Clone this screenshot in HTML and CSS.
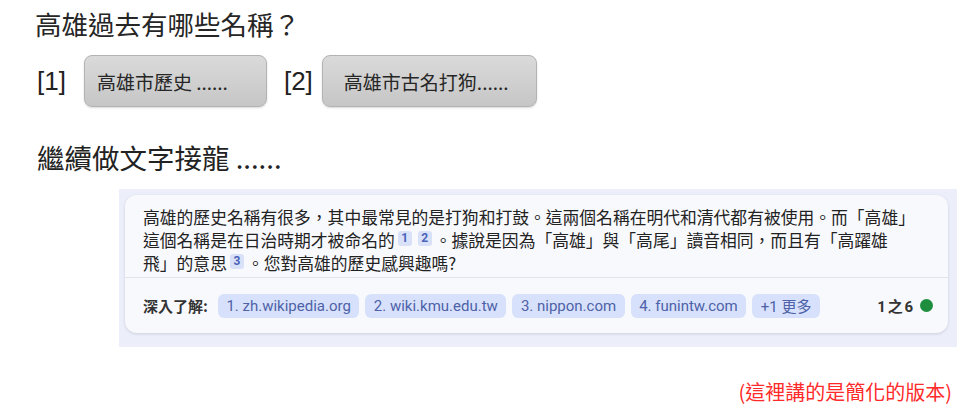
FILE: index.html
```html
<!DOCTYPE html>
<html lang="zh-Hant">
<head>
<meta charset="utf-8">
<link rel="stylesheet" href="styles.css">
</head>
<body>
<div class="slide">
  <h1 class="q">高雄過去有哪些名稱？</h1>
  <div class="refs">
    <span class="ref ref1">[1]</span>
    <span class="btn btn1">高雄市歷史 ......</span>
    <span class="ref ref2">[2]</span>
    <span class="btn btn2">高雄市古名打狗......</span>
  </div>
  <h2 class="cont">繼續做文字接龍 ......</h2>
  <div class="panel">
    <div class="card">
      <div class="body">高雄的歷史名稱有很多，其中最常見的是打狗和打鼓。這兩個名稱在明代和清代都有被使用。而「高雄」<br>這個名稱是在日治時期才被命名的<span class="cite">1</span><span class="cite">2</span>。據說是因為「高雄」與「高尾」讀音相同，而且有「高躍雄<br>飛」的意思<span class="cite">3</span>。您對高雄的歷史感興趣嗎?</div>
      <div class="foot">
        <span class="more">深入了解:</span>
        <span class="chip">1. zh.wikipedia.org</span>
        <span class="chip">2. wiki.kmu.edu.tw</span>
        <span class="chip">3. nippon.com</span>
        <span class="chip">4. funintw.com</span>
        <span class="chip">+1 更多</span>
        <span class="count">1 之 6</span>
        <span class="dot"></span>
      </div>
    </div>
  </div>
  <p class="note">(這裡講的是簡化的版本)</p>
</div>
</body>
</html>
```

FILE: styles.css
```css
html, body {
  margin: 0;
  padding: 0;
  background: #ffffff;
}
body {
  width: 959px;
  height: 412px;
  overflow: hidden;
  font-family: "Noto Sans CJK TC", "Noto Sans", sans-serif;
  color: #222;
}
.slide {
  display: flex;
  flex-direction: column;
}
.q {
  margin: 0 0 0 35px;
  padding-top: 6px;
  font-size: 26.5px;
  line-height: 36px;
  font-weight: 400;
  color: #262626;
}
.refs {
  display: flex;
  align-items: center;
  margin: 13px 0 0 37px;
  height: 52px;
}
.ref {
  font-family: "Liberation Sans", "Noto Sans", sans-serif;
  font-size: 26px;
  color: #222;
}
.ref1 { margin-right: 18px; }
.ref2 { margin: 0 9px 0 17px; }
.btn {
  box-sizing: border-box;
  height: 52px;
  display: flex;
  align-items: center;
  border: 1px solid #b3b3b3;
  border-radius: 8px;
  background: linear-gradient(#dadada, #c6c6c6);
  box-shadow: 0 1px 2px rgba(0,0,0,0.15);
  font-size: 19px;
  color: #262626;
}
.btn1 { width: 183px; padding-left: 12px; }
.btn2 { width: 215px; padding-left: 21px; }
.cont {
  margin: 32px 0 0 37px;
  font-size: 27.5px;
  line-height: 36px;
  font-weight: 400;
  color: #222;
}
.panel {
  margin: 14px 0 0 119px;
  width: 838px;
  height: 158px;
  box-sizing: border-box;
  padding: 6px 9px 14px 6px;
  background: #eceffa;
}
.card {
  height: 138px;
  box-sizing: border-box;
  background: #f8f9fd;
  border-radius: 12px;
  box-shadow: 0 1px 3px rgba(60,64,90,0.18);
  display: flex;
  flex-direction: column;
}
.body {
  padding: 11px 14px 0 18px;
  height: 83px;
  box-sizing: border-box;
  font-size: 16.8px;
  line-height: 23px;
  color: #222;
  border-bottom: 1px solid #e2e4ec;
  white-space: nowrap;
}
.cite {
  display: inline-block;
  width: 14px;
  height: 15px;
  margin: 0 3px;
  border-radius: 3px;
  background: #d9e1f8;
  color: #4a63b8;
  font-family: Roboto, "Liberation Sans", sans-serif;
  font-size: 12px;
  font-weight: 700;
  line-height: 14px;
  text-align: center;
  vertical-align: 5px;
}
.foot {
  flex: 1;
  display: flex;
  align-items: center;
  padding: 0 15px 0 18px;
  gap: 6px;
}
.more {
  font-size: 15px;
  font-weight: 700;
  color: #333;
  margin-right: 4px;
}
.chip {
  height: 24px;
  display: flex;
  align-items: center;
  padding: 0 8.5px;
  border-radius: 6px;
  background: #d8e1fb;
  color: #4d62a8;
  font-family: Roboto, "Liberation Sans", "Noto Sans CJK TC", sans-serif;
  font-size: 15px;
}
.count {
  margin-left: auto;
  font-family: Roboto, "Noto Sans CJK TC", sans-serif;
  font-size: 15px;
  font-weight: 700;
  color: #333;
  word-spacing: -2px;
}
.dot {
  width: 13px;
  height: 13px;
  border-radius: 50%;
  background: #1e8e3e;
  margin-left: 1px;
}
.note {
  margin: 31px 7px 0 0;
  text-align: right;
  font-size: 20px;
  line-height: 28px;
  color: #ff2a2a;
}
```
